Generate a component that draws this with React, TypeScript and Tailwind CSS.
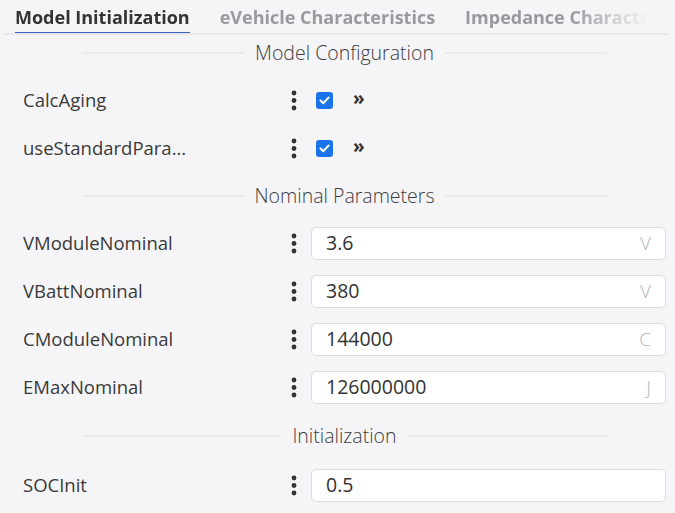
import React from 'react'

const font = { fontFamily: '"Open Sans", "Noto Sans", sans-serif' }

const Kebab = () => (
  <svg width="6" height="21" viewBox="0 0 6 21" className="text-[#333]">
    <circle cx="3" cy="3" r="2.4" fill="currentColor" />
    <circle cx="3" cy="10.5" r="2.4" fill="currentColor" />
    <circle cx="3" cy="18" r="2.4" fill="currentColor" />
  </svg>
)

const Check = () => (
  <span className="w-[17px] h-[17px] rounded-[3px] bg-[#1a73e8] flex items-center justify-center">
    <svg width="11" height="9" viewBox="0 0 11 9">
      <path d="M1.5 4.6 L4.2 7.2 L9.5 1.6" stroke="white" strokeWidth="2.1" fill="none" strokeLinecap="round" strokeLinejoin="round" />
    </svg>
  </span>
)

const Section = ({ title, className = '' }: { title: string; className?: string }) => (
  <div className={`flex items-center mx-[82px] w-[525px] ${className}`}>
    <div className="flex-1 h-[2px] bg-[#ebebee]" />
    <span className="px-[11px] text-[19.5px] font-light text-[#3d3d42] leading-none">{title}</span>
    <div className="flex-1 h-[2px] bg-[#ebebee]" />
  </div>
)

const Row = ({ label, children }: { label: string; children: React.ReactNode }) => (
  <div className="flex items-center h-[48px] pl-[23px]">
    <div className="w-[262px]">
      <span className="block max-w-[172px] text-[18.5px] text-[#3a3a3a] truncate">{label}</span>
    </div>
    <span className="w-[18px] flex justify-center"><Kebab /></span>
    {children}
  </div>
)

const BoolRow = ({ label }: { label: string }) => (
  <Row label={label}>
    <div className="flex items-center ml-[13px] gap-[20px]">
      <Check />
      <span className="text-[19px] font-bold text-[#333] leading-none -mt-[3px]">»</span>
    </div>
  </Row>
)

const NumRow = ({ label, value, unit }: { label: string; value: string; unit?: string }) => (
  <Row label={label}>
    <div className="ml-[8px] w-[355px] h-[33px] bg-white border border-[#dcdcdf] rounded-[5px] flex items-center justify-between pl-[14px] pr-[14px]">
      <span className="text-[19.5px] text-[#333]">{value}</span>
      {unit && <span className="text-[19px] font-light text-[#b5b5b8]">{unit}</span>}
    </div>
  </Row>
)

export default function App() {
  const tabs = ['Model Initialization', 'eVehicle Characteristics', 'Impedance Characteristics']
  return (
    <div className="w-[675px] h-[513px] bg-[#f5f5f7] overflow-hidden" style={font}>
      <div className="h-[35px] ml-[3px] mr-[7px] border-b-2 border-[#e8e8eb] flex">
        <div className="flex gap-[30px] pl-[12px] w-[645px] overflow-hidden [mask-image:linear-gradient(to_right,black_88%,transparent)]">
          {tabs.map((t, i) => (
            <div
              key={t}
              className={`h-[35px] flex items-center whitespace-nowrap text-[18px] font-bold ${
                i === 0 ? 'text-[#333] border-b-[3px] border-[#3f62c9] pt-[3px]' : 'text-[#9a9a9e]'
              }`}
            >
              {t}
            </div>
          ))}
        </div>
      </div>

      <Section title="Model Configuration" className="h-[36px]" />
      <div className="mt-[5px]">
        <BoolRow label="CalcAging" />
        <BoolRow label="useStandardParameters" />
      </div>

      <Section title="Nominal Parameters" className="h-[48px]" />
      <div className="-mt-[1px]">
        <NumRow label="VModuleNominal" value="3.6" unit="V" />
        <NumRow label="VBattNominal" value="380" unit="V" />
        <NumRow label="CModuleNominal" value="144000" unit="C" />
        <NumRow label="EMaxNominal" value="126000000" unit="J" />
      </div>

      <Section title="Initialization" className="h-[50px]" />
      <NumRow label="SOCInit" value="0.5" />
    </div>
  )
}
